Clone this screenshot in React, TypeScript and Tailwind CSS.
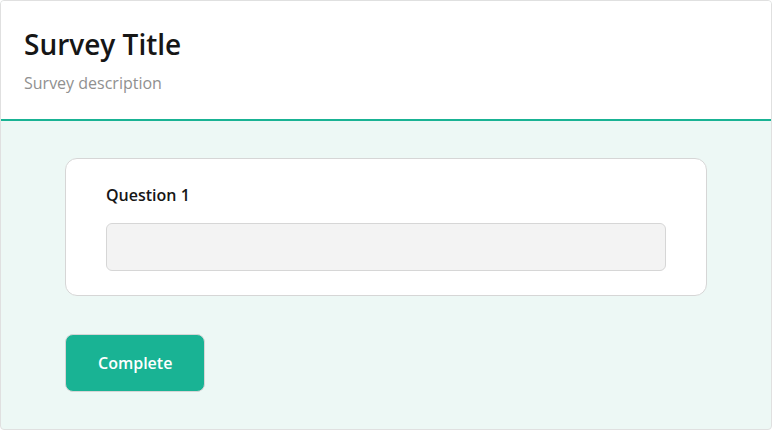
export default function App() {
  return (
    <div className="w-[772px] h-[430px] border border-[#e0e0e0] rounded-[4px] overflow-hidden flex flex-col bg-[#edf8f5]" style={{ fontFamily: '"Open Sans", sans-serif' }}>
      <div className="bg-white border-b-2 border-[#19b394] h-[120px] px-[23px] pt-[25px]">
        <h1 className="text-[28px] leading-[36px] font-semibold text-[#161616]">Survey Title</h1>
        <p className="mt-[9px] text-[16px] leading-[24px] text-[#909090]">Survey description</p>
      </div>
      <div className="px-[64px] pt-[37px]">
        <div className="bg-white border border-[#d6d6d6] rounded-[12px] px-[40px] pt-[24px] pb-[24px]">
          <div className="text-[16px] leading-[24px] font-semibold text-[#161616]">Question 1</div>
          <div className="mt-[16px] h-[48px] bg-[#f3f3f3] border border-[#d6d6d6] rounded-[6px]"></div>
        </div>
        <button className="mt-[38px] h-[58px] px-[32px] bg-[#19b394] border border-[#d6d6d6] rounded-[8px] text-white text-[16px] font-semibold">Complete</button>
      </div>
    </div>
  );
}
